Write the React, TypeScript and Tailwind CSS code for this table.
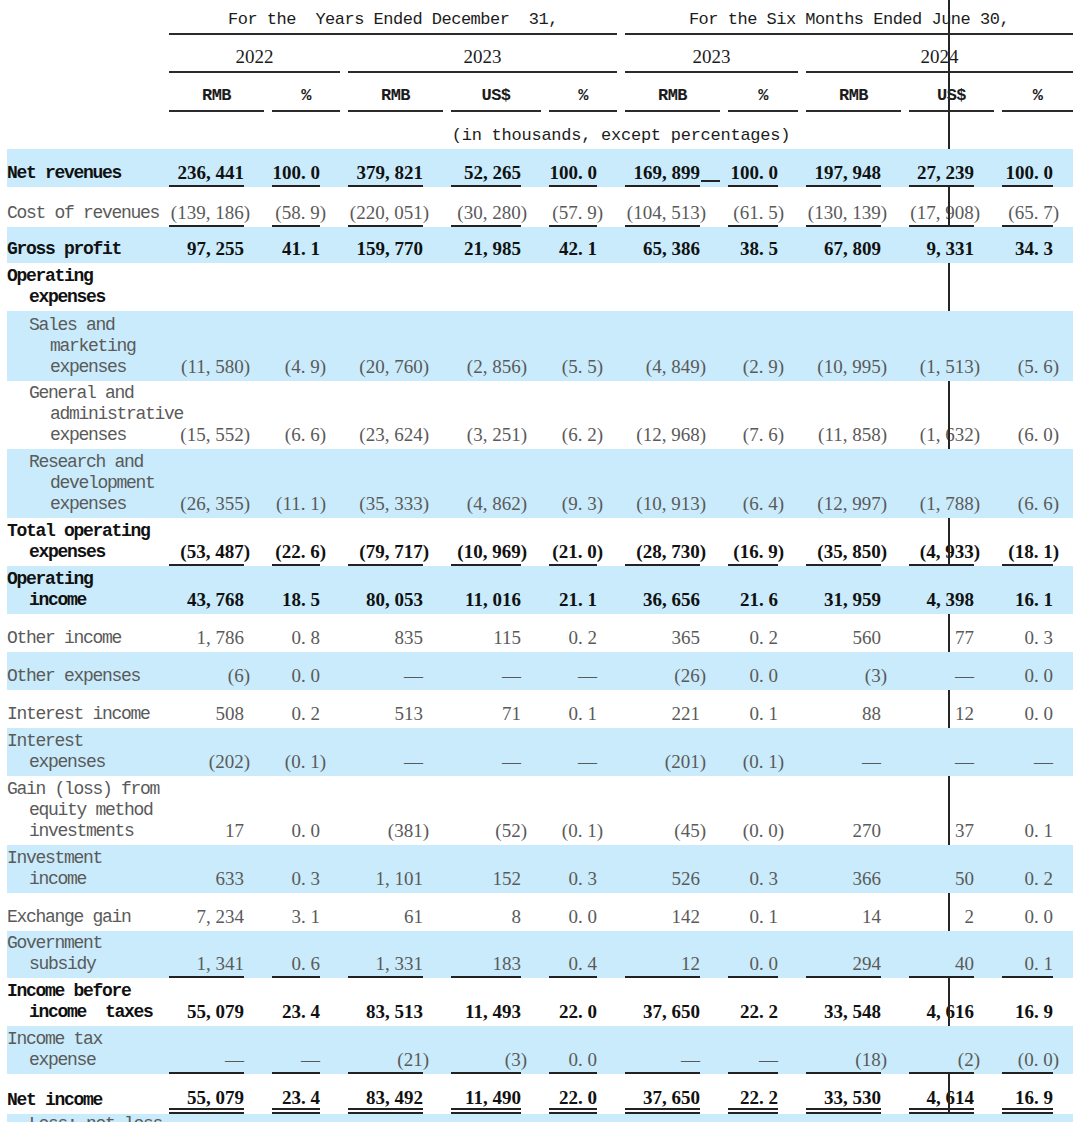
type Line = [string, 0 | 1 | 2];

interface Row {
  label: Line[];
  values?: string[];
  bold?: boolean;
  blue?: boolean;
  h: string;
  rule?: 'single' | 'double';
  extra?: number; // index of cell with the stray underscore
  top?: boolean;
}

const GRID = 'grid grid-cols-[154px_95px_68px_95px_90px_68px_95px_70px_95px_85px_71px] gap-x-2';
const MONO = "font-['Liberation_Mono','Noto_Sans_CJK_SC',monospace] text-[18px] tracking-[-1.3px]";
const HEAD = "font-['Liberation_Mono','Noto_Sans_CJK_SC',monospace] text-[17px]";
const SERIF = "font-['Liberation_Serif','Noto_Sans_CJK_SC',serif] text-[19px]";

const indent = ['pl-0', 'pl-[22px]', 'pl-[43px]'];

const rows: Row[] = [
  { label: [['Net revenues', 0]], bold: true, blue: true, h: 'h-[38px]', rule: 'single', extra: 5,
    values: ['236,441', '100.0', '379,821', '52,265', '100.0', '169,899', '100.0', '197,948', '27,239', '100.0'] },
  { label: [['Cost of revenues', 0]], h: 'h-[40px]', rule: 'single',
    values: ['(139,186)', '(58.9)', '(220,051)', '(30,280)', '(57.9)', '(104,513)', '(61.5)', '(130,139)', '(17,908)', '(65.7)'] },
  { label: [['Gross profit', 0]], bold: true, blue: true, h: 'h-[36px]',
    values: ['97,255', '41.1', '159,770', '21,985', '42.1', '65,386', '38.5', '67,809', '9,331', '34.3'] },
  { label: [['Operating', 0], ['expenses', 1]], bold: true, h: 'h-[48px]' },
  { label: [['Sales and', 1], ['marketing', 2], ['expenses', 2]], blue: true, h: 'h-[70px]',
    values: ['(11,580)', '(4.9)', '(20,760)', '(2,856)', '(5.5)', '(4,849)', '(2.9)', '(10,995)', '(1,513)', '(5.6)'] },
  { label: [['General and', 1], ['administrative', 2], ['expenses', 2]], h: 'h-[68px]',
    values: ['(15,552)', '(6.6)', '(23,624)', '(3,251)', '(6.2)', '(12,968)', '(7.6)', '(11,858)', '(1,632)', '(6.0)'] },
  { label: [['Research and', 1], ['development', 2], ['expenses', 2]], blue: true, h: 'h-[69px]',
    values: ['(26,355)', '(11.1)', '(35,333)', '(4,862)', '(9.3)', '(10,913)', '(6.4)', '(12,997)', '(1,788)', '(6.6)'] },
  { label: [['Total operating', 0], ['expenses', 1]], bold: true, h: 'h-[48px]', rule: 'single',
    values: ['(53,487)', '(22.6)', '(79,717)', '(10,969)', '(21.0)', '(28,730)', '(16.9)', '(35,850)', '(4,933)', '(18.1)'] },
  { label: [['Operating', 0], ['income', 1]], bold: true, blue: true, h: 'h-[48px]',
    values: ['43,768', '18.5', '80,053', '11,016', '21.1', '36,656', '21.6', '31,959', '4,398', '16.1'] },
  { label: [['Other income', 0]], h: 'h-[38px]',
    values: ['1,786', '0.8', '835', '115', '0.2', '365', '0.2', '560', '77', '0.3'] },
  { label: [['Other expenses', 0]], blue: true, h: 'h-[38px]',
    values: ['(6)', '0.0', '—', '—', '—', '(26)', '0.0', '(3)', '—', '0.0'] },
  { label: [['Interest income', 0]], h: 'h-[38px]',
    values: ['508', '0.2', '513', '71', '0.1', '221', '0.1', '88', '12', '0.0'] },
  { label: [['Interest', 0], ['expenses', 1]], blue: true, h: 'h-[48px]',
    values: ['(202)', '(0.1)', '—', '—', '—', '(201)', '(0.1)', '—', '—', '—'] },
  { label: [['Gain (loss) from', 0], ['equity method', 1], ['investments', 1]], h: 'h-[69px]',
    values: ['17', '0.0', '(381)', '(52)', '(0.1)', '(45)', '(0.0)', '270', '37', '0.1'] },
  { label: [['Investment', 0], ['income', 1]], blue: true, h: 'h-[48px]',
    values: ['633', '0.3', '1,101', '152', '0.3', '526', '0.3', '366', '50', '0.2'] },
  { label: [['Exchange gain', 0]], h: 'h-[38px]',
    values: ['7,234', '3.1', '61', '8', '0.0', '142', '0.1', '14', '2', '0.0'] },
  { label: [['Government', 0], ['subsidy', 1]], blue: true, h: 'h-[47px]', rule: 'single',
    values: ['1,341', '0.6', '1,331', '183', '0.4', '12', '0.0', '294', '40', '0.1'] },
  { label: [['Income before', 0], ['income  taxes', 1]], bold: true, h: 'h-[48px]',
    values: ['55,079', '23.4', '83,513', '11,493', '22.0', '37,650', '22.2', '33,548', '4,616', '16.9'] },
  { label: [['Income tax', 0], ['expense', 1]], blue: true, h: 'h-[48px]', rule: 'single',
    values: ['—', '—', '(21)', '(3)', '0.0', '—', '—', '(18)', '(2)', '(0.0)'] },
  { label: [['Net income', 0]], bold: true, h: 'h-[40px]', rule: 'double',
    values: ['55,079', '23.4', '83,492', '11,490', '22.0', '37,650', '22.2', '33,530', '4,614', '16.9'] },
  { label: [['Less: net loss', 1]], blue: true, h: 'h-[48px]', top: true },
];

const units = ['RMB', '%', 'RMB', 'US$', '%', 'RMB', '%', 'RMB', 'US$', '%'];

// SimSun-style punctuation: comma and point take a full digit cell
function Figure({ v }: { v: string }) {
  return (
    <>
      {v.split('').map((c, i) =>
        c === ',' || c === '.' ? (
          <span key={i} className="inline-block w-[9.5px]">{c}</span>
        ) : (
          c
        )
      )}
    </>
  );
}

function NumCell({ v, rule, extra }: { v: string; rule?: 'single' | 'double'; extra?: boolean }) {
  const line =
    rule === 'double'
      ? 'border-b-[6px] border-double border-[#222]'
      : rule === 'single'
        ? 'border-b-2 border-[#222] pb-[2px]'
        : 'border-b-2 border-transparent pb-[2px]';
  return (
    <div className="relative pr-[20px]">
      <div className={`flex justify-end leading-[21px] ${line}`}>
        <span className={`whitespace-nowrap ${v.endsWith(')') ? '-mr-[6px]' : ''}`}>
          <Figure v={v} />
        </span>
      </div>
      {extra && <span className="absolute right-0 bottom-[5px] h-[2px] w-[19px] bg-[#222]" />}
    </div>
  );
}

export default function App() {
  return (
    <div className="relative w-[1080px] h-[1122px] overflow-hidden bg-white text-[#1c1c1c]">
      <div className="ml-[7px] w-[1066px]">
        {/* Period headings */}
        <div className={`${GRID} h-[35px] items-end ${HEAD} tracking-[-0.5px]`}>
          <div />
          <div className="col-span-5 border-b-2 border-[#2b2b2b] pb-[3px] text-center leading-[21px] whitespace-pre">
            For the  Years Ended December  31,
          </div>
          <div className="col-span-5 border-b-2 border-[#2b2b2b] pb-[3px] text-center leading-[21px] whitespace-pre">
            For the Six Months Ended June 30,
          </div>
        </div>

        <div className={`${GRID} h-[38px] items-end ${SERIF}`}>
          <div />
          <div className="col-span-2 border-b-2 border-[#2b2b2b] pb-[4px] text-center leading-[21px]">2022</div>
          <div className="col-span-3 border-b-2 border-[#2b2b2b] pb-[4px] text-center leading-[21px]">2023</div>
          <div className="col-span-2 border-b-2 border-[#2b2b2b] pb-[4px] text-center leading-[21px]">2023</div>
          <div className="col-span-3 border-b-2 border-[#2b2b2b] pb-[4px] text-center leading-[21px]">2024</div>
        </div>

        <div className={`${GRID} h-[39px] items-end ${HEAD} tracking-[-0.5px] font-bold`}>
          <div />
          {units.map((u, i) => (
            <div key={i} className="border-b-2 border-[#2b2b2b] pb-[4px] text-center leading-[21px]">
              {u}
            </div>
          ))}
        </div>

        <div className={`${GRID} h-[37px] items-end ${HEAD} tracking-[-0.25px]`}>
          <div />
          <div className="col-span-10 pb-[3px] text-center leading-[21px]">(in thousands, except percentages)</div>
        </div>

        {/* Statement rows */}
        {rows.map((r, ri) => (
          <div
            key={ri}
            className={`${GRID} ${r.h} ${r.top ? 'items-start' : 'items-end'} ${r.blue ? 'relative z-10 bg-[#c9ebfb]' : ''} ${
              r.bold ? 'text-[#111] font-bold' : 'text-[#5a5a5a]'
            }`}
          >
            <div className={`${MONO} leading-[21px] ${r.top ? '' : 'pb-[3px]'}`}>
              {r.label.map(([t, lvl], li) => (
                <div key={li} className={`${indent[lvl]} whitespace-pre`}>
                  {t}
                </div>
              ))}
            </div>
            {r.values?.map((v, vi) => (
              <div key={vi} className={SERIF}>
                <NumCell v={v} rule={r.rule} extra={r.extra === vi} />
              </div>
            ))}
          </div>
        ))}
      </div>

      {/* stray scan line running down the 2024 US$ column */}
      <div className="absolute left-[948px] top-0 bottom-0 w-[2px] bg-[#262626]" />
    </div>
  );
}
